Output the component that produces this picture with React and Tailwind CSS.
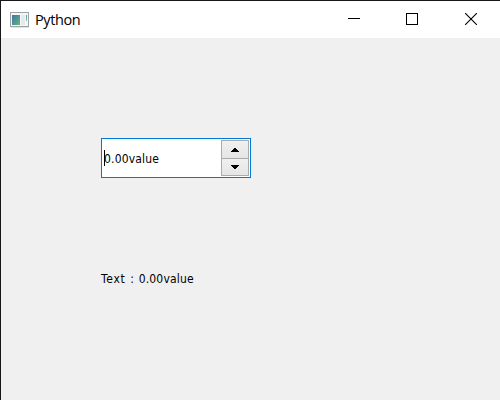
function AppIcon() {
  return (
    <svg className="block h-[16px] w-[20px]" viewBox="0 0 20 16" shapeRendering="crispEdges">
      <defs>
        <linearGradient id="screen" x1="0" y1="0" x2="1" y2="1">
          <stop offset="0" stopColor="#3d74a2" />
          <stop offset="1" stopColor="#66b57e" />
        </linearGradient>
        <linearGradient id="strip" x1="0" y1="0" x2="0" y2="1">
          <stop offset="0" stopColor="#5d8fc0" />
          <stop offset="1" stopColor="#7fc895" />
        </linearGradient>
      </defs>
      <path d="M0 0h19v15H0z" fill="#9da3a7" />
      <path d="M1 1h17v13H1z" fill="#f5f6f7" />
      <path d="M2 3h8v10H2z" fill="url(#screen)" />
      <path d="M11 3h4v10h-4z" fill="#e7e9eb" />
      <path d="M16 3h1v6h-1z" fill="url(#strip)" />
      <path d="M1 15h18v1H1z" fill="#e3e3e3" />
    </svg>
  );
}

function TitleBar() {
  return (
    <header className="flex h-[37px] shrink-0 items-center bg-white pl-[9px]">
      <AppIcon />
      <h1 className="ml-[5px] flex-1 pt-px font-['Open_Sans',sans-serif] text-[14.5px] leading-[20px] tracking-[-0.4px] text-black">
        Python
      </h1>
      <button className="flex h-full w-[58px] items-center justify-center pr-[2px] pb-[2px]" aria-label="Minimize">
        <span className="h-px w-[12px] bg-black" />
      </button>
      <button className="flex h-full w-[58px] items-center justify-center pr-[2px] pb-px" aria-label="Maximize">
        <span className="h-[12px] w-[12px] border border-black" />
      </button>
      <button className="flex h-full w-[58px] items-center justify-center pb-px" aria-label="Close">
        <svg className="h-[12px] w-[12px]" viewBox="0 0 12 12" stroke="black" strokeWidth="1.1">
          <path d="M0 0l12 12M12 0L0 12" />
        </svg>
      </button>
    </header>
  );
}

function SpinBox() {
  return (
    <div className="flex h-[40px] w-[150px] border border-[#0078d7] bg-white p-px">
      <div className="flex flex-1 items-center pl-px">
        <span className="h-[16px] w-px bg-black" />
        <span className="-ml-px whitespace-nowrap pt-px">0.00value</span>
      </div>
      <div className="flex w-[28px] flex-col border border-[#ababab] bg-[#ababab]">
        <button className="flex h-[17px] items-center justify-center bg-linear-to-b from-[#f0f0f0] to-[#e5e5e5]" aria-label="Increase">
          <svg className="h-[4px] w-[8px]" viewBox="0 0 8 4" shapeRendering="crispEdges">
            <path d="M3 0h2v1h1v1h1v1h1v1H0V3h1V2h1V1h1z" />
          </svg>
        </button>
        <button className="mt-px flex flex-1 items-center justify-center bg-linear-to-b from-[#f0f0f0] to-[#e5e5e5]" aria-label="Decrease">
          <svg className="h-[4px] w-[8px]" viewBox="0 0 8 4" shapeRendering="crispEdges">
            <path d="M0 0h8v1H7v1H6v1H5v1H3V3H2V2H1V1H0z" />
          </svg>
        </button>
      </div>
    </div>
  );
}

export default function App() {
  return (
    <div className="flex h-[400px] w-[500px] flex-col overflow-hidden border-l border-t border-[#17171a] bg-[#f0f0f0]">
      <TitleBar />
      <main className="flex flex-1 flex-col pl-[100px] pt-[100px] font-['DejaVu_Sans_Condensed','DejaVu_Sans',sans-serif] [font-stretch:condensed] text-[12px] leading-[16px] tracking-[0.18px] text-black">
        <SpinBox />
        <p className="mt-[93px] [word-spacing:1px]">
          <span className="tracking-[0.75px]">Text</span> : 0.00value
        </p>
      </main>
    </div>
  );
}
